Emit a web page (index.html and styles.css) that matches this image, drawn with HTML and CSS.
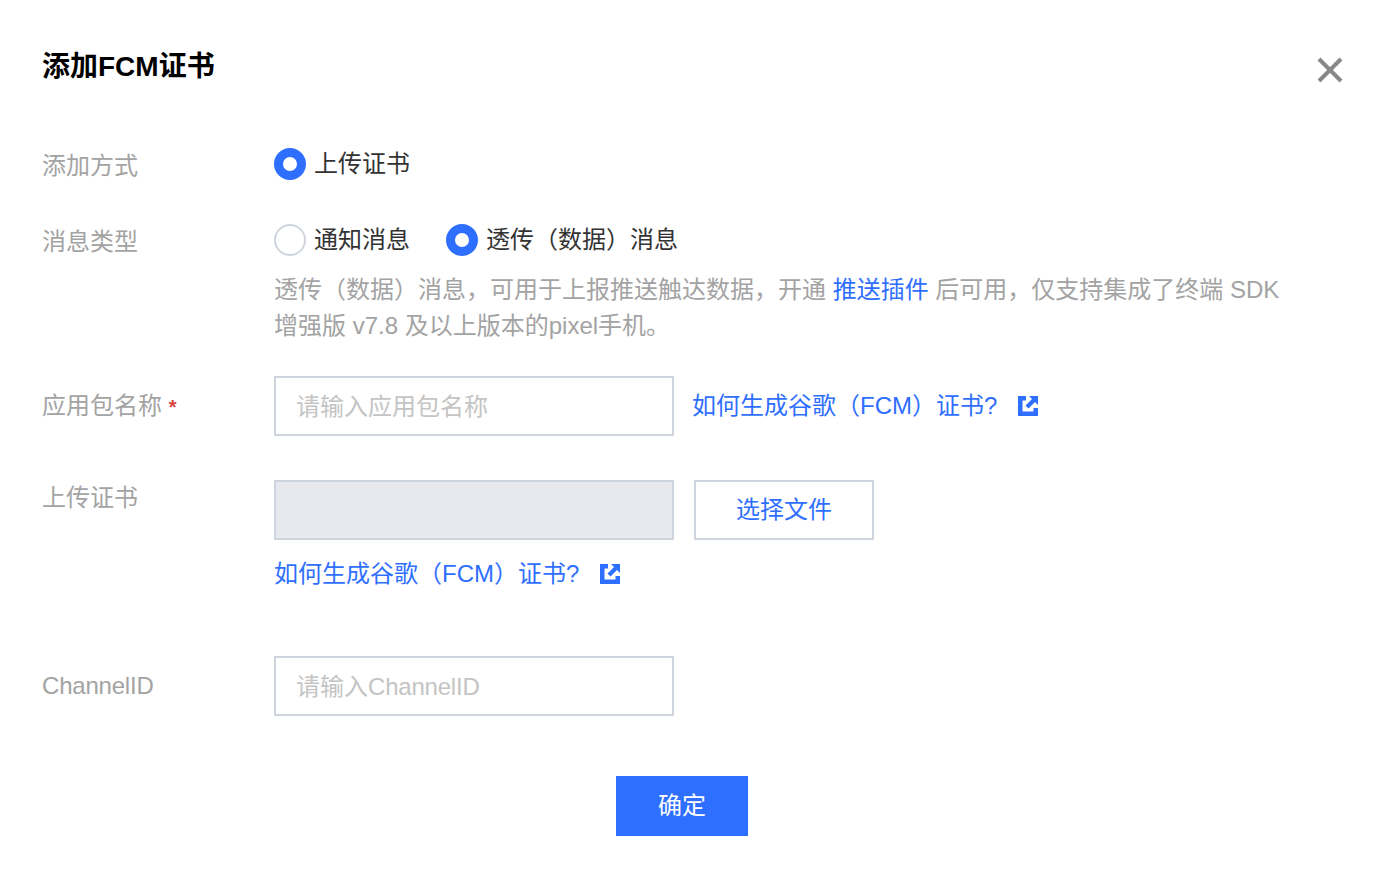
FILE: index.html
```html
<!DOCTYPE html>
<html>
<head>
    <title>添加FCM证书</title>
    <link rel="stylesheet" href="styles.css">
</head>
<body>
    <div class="dialog">
        <div class="dialog-head">
            <h3 class="dialog-title">添加FCM证书</h3>
            <svg class="close-icon" width="28" height="28" viewBox="0 0 28 28">
                <path d="M3 3L25 25M25 3L3 25" stroke="#888" stroke-width="4" fill="none"/>
            </svg>
        </div>
        <div class="form">
            <div class="form-row row-way">
                <label class="form-label">添加方式</label>
                <div class="form-control">
                    <div class="radio-group">
                        <span class="radio"><i class="radio-dot is-checked"></i>上传证书</span>
                    </div>
                </div>
            </div>
            <div class="form-row row-type">
                <label class="form-label">消息类型</label>
                <div class="form-control">
                    <div class="radio-group">
                        <span class="radio"><i class="radio-dot"></i>通知消息</span>
                        <span class="radio"><i class="radio-dot is-checked"></i>透传（数据）消息</span>
                    </div>
                    <p class="help-text">透传（数据）消息，可用于上报推送触达数据，开通 <a class="link">推送插件</a> 后可用，仅支持集成了终端 SDK 增强版 v7.8 及以上版本的pixel手机。</p>
                </div>
            </div>
            <div class="form-row row-package">
                <label class="form-label">应用包名称 <em class="required">*</em></label>
                <div class="form-control control-inline">
                    <div class="input">请输入应用包名称</div>
                    <a class="link doc-link">如何生成谷歌（FCM）证书?
                        <svg class="ext-icon" width="20" height="20" viewBox="0 0 20 20">
                            <path d="M0 0H8V4.5H4.5V15.5H15.5V12H20V20H0Z" fill="#2f6fff"/>
                            <path d="M11 0H20V9L17 6L10.5 12.5L7.5 9.5L14 3Z" fill="#2f6fff"/>
                        </svg>
                    </a>
                </div>
            </div>
            <div class="form-row row-cert">
                <label class="form-label">上传证书</label>
                <div class="form-control">
                    <div class="control-inline">
                        <div class="input is-disabled"></div>
                        <button class="btn-file">选择文件</button>
                    </div>
                    <a class="link doc-link under-link">如何生成谷歌（FCM）证书?
                        <svg class="ext-icon" width="20" height="20" viewBox="0 0 20 20">
                            <path d="M0 0H8V4.5H4.5V15.5H15.5V12H20V20H0Z" fill="#2f6fff"/>
                            <path d="M11 0H20V9L17 6L10.5 12.5L7.5 9.5L14 3Z" fill="#2f6fff"/>
                        </svg>
                    </a>
                </div>
            </div>
            <div class="form-row row-channel">
                <label class="form-label tight">ChannelID</label>
                <div class="form-control">
                    <div class="input">请输入<span class="tight">ChannelID</span></div>
                </div>
            </div>
        </div>
        <div class="dialog-foot">
            <button class="btn-primary">确定</button>
        </div>
    </div>
</body>
</html>
```

FILE: styles.css
```css
* {
    box-sizing: border-box;
}
body {
    margin: 0;
    background-color: #fff;
    color: #333;
    font-family: "Liberation Sans", "Noto Sans CJK SC", sans-serif;
    font-size: 24px;
}
.dialog {
    width: 1382px;
    height: 882px;
    padding: 47px 38px 0 42px;
}
.dialog-head {
    display: flex;
    justify-content: space-between;
    height: 101px;
}
.dialog-title {
    margin: 0;
    color: #000;
    font-size: 28px;
    font-weight: bold;
    line-height: 40px;
}
.close-icon {
    margin-top: 9px;
}
.form-row {
    display: flex;
}
.form-label {
    width: 232px;
    flex-shrink: 0;
    color: #a3a3a3;
    line-height: 36px;
}
.tight {
    letter-spacing: -0.2px;
}
.required {
    color: #d9423c;
    font-style: normal;
    font-size: 20px;
    font-weight: bold;
}
.row-type {
    margin-top: 40px;
}
.row-package {
    margin-top: 32px;
}
.row-cert {
    margin-top: 44px;
}
.row-channel {
    margin-top: 64px;
}
.row-package .form-label,
.row-channel .form-label {
    padding-top: 12px;
}
.radio-group {
    display: flex;
    gap: 36px;
}
.radio {
    display: flex;
    align-items: center;
    height: 32px;
    line-height: 32px;
}
.radio-dot {
    width: 32px;
    height: 32px;
    margin-right: 8px;
    border: 2px solid #cfd5de;
    border-radius: 50%;
}
.radio-dot.is-checked {
    border: 9px solid #2f6fff;
}
.help-text {
    width: 1030px;
    margin: 16px 0 0;
    color: #a3a3a3;
    line-height: 36px;
}
.link {
    color: #2f6fff;
}
.control-inline {
    display: flex;
    align-items: center;
}
.input {
    width: 400px;
    height: 60px;
    padding: 0 20px;
    border: 2px solid #cfd5de;
    color: #c4c4c4;
    line-height: 58px;
}
.input.is-disabled {
    background-color: #e7e9ee;
}
.doc-link {
    display: inline-flex;
    align-items: center;
    margin-left: 18px;
    line-height: 36px;
}
.under-link {
    margin: 16px 0 0;
}
.ext-icon {
    margin-left: 21px;
}
.btn-file {
    width: 180px;
    height: 60px;
    margin-left: 20px;
    padding: 0 0 6px;
    border: 2px solid #cfd5de;
    background-color: #fff;
    color: #2f6fff;
    font: inherit;
}
.dialog-foot {
    display: flex;
    justify-content: center;
    margin-top: 60px;
    padding-right: 22px;
}
.btn-primary {
    width: 132px;
    height: 60px;
    padding: 0 0 6px;
    border: 0;
    background-color: #2f6fff;
    color: #fff;
    font: inherit;
}
```
